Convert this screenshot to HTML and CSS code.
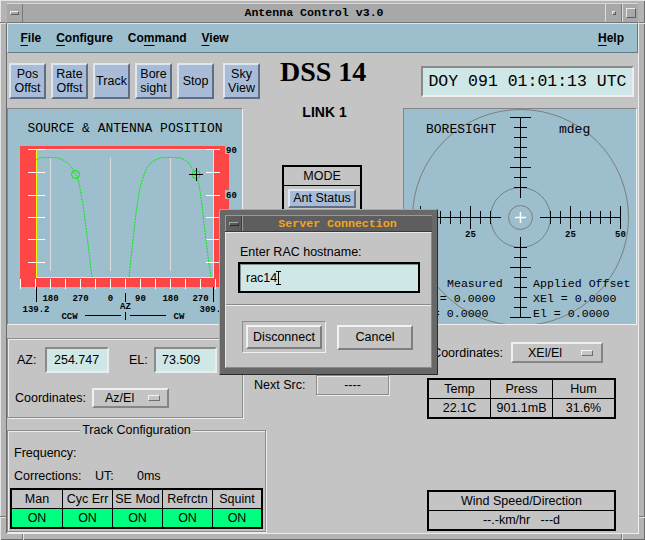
FILE: index.html
```html
<!DOCTYPE html>
<html>
<head>
<meta charset="utf-8">
<title>Antenna Control v3.0</title>
<link rel="stylesheet" href="styles.css">
</head>
<body>
<div class="window">
  <div class="titlebar">
    <div class="tb-btn tb-menu"><span class="glyph-bar"></span></div>
    <div class="tb-title">Antenna Control v3.0</div>
    <div class="tb-btn tb-min"><span class="glyph-dot"></span></div>
    <div class="tb-btn tb-max"><span class="glyph-box"></span></div>
  </div>
  <div class="client">
    <div class="menubar">
      <span class="menu"><u>F</u>ile</span>
      <span class="menu"><u>C</u>onfigure</span>
      <span class="menu">Co<u>m</u>mand</span>
      <span class="menu"><u>V</u>iew</span>
      <span class="menu help"><u>H</u>elp</span>
    </div>
    <div class="toolbar">
      <div class="tbtn">Pos<br>Offst</div>
      <div class="tbtn">Rate<br>Offst</div>
      <div class="tbtn">Track</div>
      <div class="tbtn">Bore<br>sight</div>
      <div class="tbtn">Stop</div>
      <div class="tbtn sky">Sky<br>View</div>
      <div class="dss">DSS 14</div>
      <div class="doy">DOY 091 01:01:13 UTC</div>
    </div>
    <div class="columns">
      <div class="col-left">
        <div class="panel src">
          <div class="panel-title">SOURCE &amp; ANTENNA POSITION</div>
          <svg class="chart" width="234" height="184" viewBox="8 140 234 184">
            <rect x="20" y="146" width="209" height="141" fill="#ff4646"/>
            <rect x="36.5" y="149.5" width="177" height="128" fill="#9cbecd" stroke="#ffff00"/>
            <g stroke="#dcdcdc" shape-rendering="crispEdges">
              <line x1="50.5" y1="158" x2="50.5" y2="271"/>
              <line x1="110.5" y1="158" x2="110.5" y2="271"/>
              <line x1="170.5" y1="158" x2="170.5" y2="271"/>
            </g>
            <path stroke="#ffffff" shape-rendering="crispEdges" d="M28 149.5H45 M28 172.5H45 M28 195.5H45 M28 217.5H45 M28 239.5H45 M28 262.5H45 M206 149.5H220 M206 172.5H220 M206 195.5H220 M206 217.5H220 M206 239.5H220 M206 262.5H220 M20.5 279V289 M35.5 279V289 M50.5 279V289 M65.5 279V289 M80.5 279V289 M95.5 279V289 M110.5 279V289 M125.5 279V289 M140.5 279V289 M155.5 279V289 M170.5 279V289 M185.5 279V289 M200.5 279V289 M215.5 279V289"/>
            <path stroke="#000000" shape-rendering="crispEdges" d="M36.5 287V302 M125.5 293V302 M213.5 287V302 M85 315.5H121 M130 315.5H166 M125.5 312V320"/>
            <g fill="none" stroke="#00f000" stroke-width="1" stroke-dasharray="2 1">
              <polyline points="36,160 40,158 45,157.5 52,157.5 58,158 63,160 67,162.5 71,166.5 74,171 76,175 78,179 80,188 83,205 85,220 87,236 89,252 90.5,265 92,277"/>
              <polyline points="129,277 131,258 133,240 135,222 137,206 139,193 141,184 144,175 147,168 151,163 155,160 160,158 166,157.5 175,157.5 181,158 185,160 189,163 192,168 195,173 197,178 199,185 200,191 202,205 204,224 206,240 207.5,252 209,264 211,277"/>
            </g>
            <circle cx="75.5" cy="174.5" r="4" fill="none" stroke="#00f000"/>
            <circle cx="196" cy="174.5" r="4" fill="none" stroke="#00f000"/>
            <path stroke="#000000" shape-rendering="crispEdges" d="M189 174.5H203 M196.5 168V181"/>
            <rect x="225" y="145" width="13" height="9" fill="#9cbecd"/>
            <rect x="225" y="190" width="13" height="9" fill="#9cbecd"/>
            <g class="t9">
              <text x="231.5" y="153" text-anchor="middle">90</text>
              <text x="231.5" y="198" text-anchor="middle">60</text>
              <text x="50.5" y="301" text-anchor="middle">180</text>
              <text x="80.5" y="301" text-anchor="middle">270</text>
              <text x="110.5" y="301" text-anchor="middle">0</text>
              <text x="140.5" y="301" text-anchor="middle">90</text>
              <text x="170.5" y="301" text-anchor="middle">180</text>
              <text x="200.5" y="301" text-anchor="middle">270</text>
              <text x="36" y="312" text-anchor="middle">139.2</text>
              <text x="213" y="312" text-anchor="middle">309.2</text>
              <text x="125.5" y="309" text-anchor="middle">AZ</text>
              <text x="69.5" y="319" text-anchor="middle">CCW</text>
              <text x="179" y="319" text-anchor="middle">CW</text>
            </g>
          </svg>
        </div>
        <div class="azel-box">
          <div class="az-row">
            <span class="lbl-az">AZ:</span>
            <span class="field f-az">254.747</span>
            <span class="lbl-el">EL:</span>
            <span class="field f-el">73.509</span>
          </div>
          <div class="coord-row-left">
            <span class="lbl-coord">Coordinates:</span>
            <span class="option opt-az">Az/El<i class="ind"></i></span>
          </div>
        </div>
        <fieldset class="track">
          <legend>Track Configuration</legend>
          <div class="trow">Frequency:</div>
          <div class="trow"><span class="corr">Corrections:</span><span class="ut">UT:</span><span class="ms">0ms</span></div>
          <div class="g5">
            <div class="cell">Man</div>
            <div class="cell">Cyc Err</div>
            <div class="cell">SE Mod</div>
            <div class="cell">Refrctn</div>
            <div class="cell">Squint</div>
            <div class="cell on">ON</div>
            <div class="cell on">ON</div>
            <div class="cell on">ON</div>
            <div class="cell on">ON</div>
            <div class="cell on">ON</div>
          </div>
        </fieldset>
      </div>
      <div class="col-mid">
        <div class="link">LINK 1</div>
        <div class="mode">
          <div class="mode-h">MODE</div>
          <div class="ant">Ant Status</div>
        </div>
        <div class="next">
          <span class="next-l">Next Src:</span>
          <span class="next-v">----</span>
        </div>
      </div>
      <div class="col-right">
        <div class="panel bore">
          <svg class="chart" width="232" height="215" viewBox="404 109 232 215">
            <g fill="none" stroke="#7e7e7e">
              <circle cx="520.5" cy="217.5" r="108"/>
              <circle cx="520.5" cy="217.5" r="30"/>
              <circle cx="520.5" cy="217.5" r="12"/>
            </g>
            <path stroke="#000000" shape-rendering="crispEdges" d="M520.5 117V198 M520.5 237V318 M420 217.5H501 M540 217.5H621 M514 187.5H527 M514 177.5H527 M510 167.5H531 M514 157.5H527 M514 147.5H527 M514 137.5H527 M514 127.5H527 M510 117.5H531 M514 247.5H527 M514 257.5H527 M510 267.5H531 M514 277.5H527 M514 287.5H527 M514 297.5H527 M514 307.5H527 M510 317.5H531 M490.5 211V224 M480.5 211V224 M470.5 206V229 M460.5 211V224 M450.5 211V224 M440.5 211V224 M430.5 211V224 M420.5 206V229 M550.5 211V224 M560.5 211V224 M570.5 206V229 M580.5 211V224 M590.5 211V224 M600.5 211V224 M610.5 211V224 M620.5 206V229"/>
            <path stroke="#ffffff" stroke-width="1.5" d="M515 217.5H526 M520.5 212V223"/>
            <g class="t9">
              <text x="420.5" y="237" text-anchor="middle">50</text>
              <text x="470.5" y="237" text-anchor="middle">25</text>
              <text x="570.5" y="237" text-anchor="middle">25</text>
              <text x="620.5" y="237" text-anchor="middle">50</text>
            </g>
            <g class="t13">
              <text x="426" y="133">BORESIGHT</text>
              <text x="559" y="133">mdeg</text>
            </g>
            <g class="t12">
              <text x="447" y="287">Measured</text>
              <text x="533" y="287">Applied Offset</text>
              <text x="412" y="302">XEl = 0.0000</text>
              <text x="533" y="302">XEl = 0.0000</text>
              <text x="412" y="317">El  = 0.0000</text>
              <text x="533" y="317">El  = 0.0000</text>
            </g>
          </svg>
        </div>
        <div class="coord-row-right">
          <span class="lbl-coord-r">Coordinates:</span>
          <span class="option opt-xel">XEl/El<i class="ind"></i></span>
        </div>
        <div class="met">
          <div class="cell">Temp</div>
          <div class="cell">Press</div>
          <div class="cell">Hum</div>
          <div class="cell">22.1C</div>
          <div class="cell">901.1mB</div>
          <div class="cell">31.6%</div>
        </div>
        <div class="wind">
          <div class="cell">Wind Speed/Direction</div>
          <div class="cell pre">--.-km/hr   ---d</div>
        </div>
      </div>
    </div>
  </div>

  <div class="dialog">
    <div class="dlg-title">
      <div class="dlg-menu"><span class="glyph-bar dark"></span></div>
      <div class="dlg-name">Server Connection</div>
    </div>
    <div class="dlg-body">
      <div class="dlg-label">Enter RAC hostname:</div>
      <div class="dlg-input"><span>rac14</span><span class="caret"></span></div>
      <div class="dlg-sep"></div>
      <div class="dlg-buttons">
        <div class="default-ring"><div class="pbtn">Disconnect</div></div>
        <div class="pbtn cancel">Cancel</div>
      </div>
    </div>
  </div>

  <span class="notch nh nl1"></span>
  <span class="notch nh nr1"></span>
  <span class="notch nh nl2"></span>
  <span class="notch nh nr2"></span>
  <span class="notch nv nb1"></span>
  <span class="notch nv nb2"></span>
</div>
</body>
</html>
```

FILE: styles.css
```css
* { box-sizing: border-box; }
html, body { margin: 0; padding: 0; }
body {
  width: 645px;
  height: 540px;
  overflow: hidden;
  background: #b4b4b4;
  font-family: "Liberation Sans", Arial, sans-serif;
  font-size: 12.5px;
  color: #000;
}

.window {
  position: relative;
  width: 645px;
  height: 540px;
  padding: 3px 6px 6px 6px;
  background: #b4b4b4;
  box-shadow: inset 1px 1px 0 #e4e4e4, inset -1px -1px 0 #6a6a6a;
  display: flex;
  flex-direction: column;
}

/* ---------- title bar ---------- */
.titlebar {
  height: 20px;
  margin: 0 1px;
  display: flex;
  background: #a8a8a8;
  border-top: 1px solid #d8d8d8;
  border-bottom: 1px solid #737373;
}
.tb-btn {
  display: flex;
  align-items: center;
  justify-content: center;
  border-left: 1px solid #dcdcdc;
  border-right: 1px solid #7a7a7a;
}
.tb-menu { width: 16px; border-left: none; }
.tb-min { width: 17px; }
.tb-max { width: 16px; border-right: none; }
.tb-title {
  flex: 1;
  text-align: center;
  font-family: "Liberation Mono", monospace;
  font-weight: bold;
  font-size: 11.6px;
  line-height: 18px;
}
.glyph-bar {
  display: block;
  width: 9px;
  height: 4px;
  background: #a8a8a8;
  border-top: 1px solid #ececec;
  border-left: 1px solid #ececec;
  border-bottom: 1px solid #5e5e5e;
  border-right: 1px solid #5e5e5e;
}
.glyph-bar.dark {
  width: 10px;
  background: #5c5c5c;
  border-top-color: #a4a4a4;
  border-left-color: #a4a4a4;
  border-bottom-color: #2a2a2a;
  border-right-color: #2a2a2a;
}
.glyph-dot {
  display: block;
  width: 4px;
  height: 4px;
  border-top: 1px solid #e8e8e8;
  border-left: 1px solid #e8e8e8;
  border-bottom: 1px solid #5e5e5e;
  border-right: 1px solid #5e5e5e;
}
.glyph-box {
  display: block;
  width: 10px;
  height: 10px;
  border-top: 1px solid #e8e8e8;
  border-left: 1px solid #e8e8e8;
  border-bottom: 1px solid #5e5e5e;
  border-right: 1px solid #5e5e5e;
}

/* ---------- client ---------- */
.client {
  flex: 1;
  display: flex;
  flex-direction: column;
  background: #c4c4c4;
  border-left: 1px solid #6c6c6c;
  border-right: 1px solid #ececec;
  border-bottom: 1px solid #ececec;
}

.menubar {
  height: 30px;
  flex: none;
  display: flex;
  align-items: center;
  gap: 15px;
  padding: 0 13px 0 12.5px;
  background: #9cbecd;
  border: 1px solid;
  border-color: #d8e8ef #5e7c8a #5e7c8a #d8e8ef;
  font-weight: bold;
  font-size: 12px;
}
.menu u {
  text-decoration: underline;
  text-underline-offset: 3px;
}
.help { margin-left: auto; }

.toolbar {
  height: 50px;
  flex: none;
  display: flex;
  align-items: flex-start;
  padding-left: 2px;
}
.tbtn {
  width: 37px;
  height: 36px;
  margin-top: 10px;
  margin-right: 5px;
  display: flex;
  align-items: center;
  justify-content: center;
  text-align: center;
  line-height: 14px;
  background: #a8bcd8;
  border: 2px solid;
  border-color: #dde7f3 #5f6e84 #5f6e84 #dde7f3;
}
.tbtn.sky { margin-left: 4px; margin-right: 0; }
.dss {
  margin-left: 20px;
  margin-top: 3px;
  font-family: "Liberation Serif", serif;
  font-weight: bold;
  font-size: 28px;
  line-height: 32px;
}
.doy {
  margin-left: auto;
  margin-right: 4px;
  margin-top: 13px;
  width: 213px;
  height: 31px;
  background: #cfe7e6;
  border: 2px solid;
  border-color: #8a8a8a #efefef #efefef #8a8a8a;
  font-family: "Liberation Mono", monospace;
  font-size: 16.5px;
  line-height: 27px;
  text-align: center;
}

.columns {
  flex: 1;
  display: flex;
  align-items: flex-start;
}
.col-left { width: 236px; flex: none; display: flex; flex-direction: column; }
.col-mid { width: 160px; flex: none; display: flex; flex-direction: column; }
.col-right { width: 235px; flex: none; display: flex; flex-direction: column; }

.panel {
  margin-top: 5px;
  height: 217px;
  background: #9cbecd;
  border: 1px solid;
  border-color: #858585 #f0f0f0 #f0f0f0 #858585;
}
.src { width: 236px; }
.bore { width: 234px; }
.panel-title {
  height: 31px;
  padding-top: 13px;
  line-height: 14px;
  text-align: center;
  font-family: "Liberation Mono", monospace;
  font-size: 13px;
}
.chart { display: block; }
.t9 {
  font-family: "Liberation Mono", monospace;
  font-weight: bold;
  font-size: 9px;
  fill: #000;
}
.t13 {
  font-family: "Liberation Mono", monospace;
  font-size: 13px;
  fill: #000;
}
.t12 {
  font-family: "Liberation Mono", monospace;
  font-size: 11.6px;
  fill: #000;
  white-space: pre;
}

/* ---------- AZ / EL ---------- */
.azel-box {
  margin-top: 13px;
  height: 80px;
  width: 236px;
  border: 1px solid #8c8c8c;
  box-shadow: inset 1px 1px 0 #ececec, 1px 1px 0 #ececec;
}
.az-row {
  display: flex;
  align-items: center;
  height: 26px;
  margin-top: 8px;
  padding-left: 9px;
}
.lbl-az { width: 28px; }
.lbl-el { width: 25px; margin-left: 20px; }
.field {
  height: 26px;
  background: #cfe7e6;
  border: 2px solid;
  border-color: #8a8a8a #ececec #ececec #8a8a8a;
  line-height: 22px;
}
.f-az { width: 64px; padding-left: 7px; }
.f-el { width: 63px; padding-left: 6px; }
.coord-row-left {
  display: flex;
  align-items: center;
  height: 20px;
  margin-top: 15px;
  padding-left: 7px;
}
.lbl-coord { width: 77px; }
.option {
  display: flex;
  align-items: center;
  justify-content: space-between;
  background: #c4c4c4;
  border: 2px solid;
  border-color: #f0f0f0 #858585 #858585 #f0f0f0;
}
.opt-az { width: 77px; height: 20px; padding: 0 7px 0 11px; }
.opt-xel { width: 92px; height: 21px; padding: 0 8px 0 15px; }
.ind {
  display: block;
  width: 12px;
  height: 6px;
  border-top: 1px solid #f4f4f4;
  border-left: 1px solid #f4f4f4;
  border-bottom: 1px solid #6e6e6e;
  border-right: 1px solid #6e6e6e;
}

/* ---------- Track configuration ---------- */
.track {
  margin: 4px 0 0 0;
  padding: 0 2px 2px 2px;
  width: 259px;
  border: 1px solid #8c8c8c;
  box-shadow: inset 1px 1px 0 #ececec, 1px 1px 0 #ececec;
  min-width: 0;
}
.track legend {
  margin: 0 auto;
  padding: 0 2px;
  line-height: 16px;
  background: #c4c4c4;
}
.trow {
  margin-top: 7px;
  line-height: 16px;
  padding-left: 4px;
}
.corr { display: inline-block; width: 81px; }
.ut { display: inline-block; width: 42px; }
.g5 {
  margin-top: 4px;
  display: grid;
  grid-template-columns: 50px 49px 49px 49px 48px;
  grid-auto-rows: 18px;
  gap: 1px;
  background: #000;
  border: 2px solid #000;
  width: 253px;
}
.cell {
  background: #c4c4c4;
  text-align: center;
  line-height: 18px;
  white-space: nowrap;
}
.cell.on { background: #00ff80; }
.cell.pre { white-space: pre; }

/* ---------- middle ---------- */
.link {
  height: 18px;
  line-height: 18px;
  text-align: center;
  padding-left: 3px;
  font-weight: bold;
  font-size: 14px;
}
.mode {
  margin: 44px 0 0 39px;
  width: 80px;
  height: 120px;
  border: 2px solid #000;
}
.mode-h {
  height: 19px;
  line-height: 18px;
  text-align: center;
  border-bottom: 1px solid #000;
}
.ant {
  margin: 3px 0 0 4px;
  width: 68px;
  height: 19px;
  line-height: 15px;
  text-align: center;
  background: #a8bcd8;
  border: 2px solid;
  border-color: #dde7f3 #5f6e84 #5f6e84 #dde7f3;
}
.next {
  margin-top: 90px;
  padding-left: 11px;
  display: flex;
  align-items: center;
  height: 20px;
}
.next-l { width: 62px; }
.next-v {
  width: 73px;
  height: 20px;
  line-height: 18px;
  text-align: center;
  border: 1px solid #8c8c8c;
  box-shadow: inset 1px 1px 0 #ececec, 1px 1px 0 #ececec;
}

/* ---------- right bottom ---------- */
.coord-row-right {
  display: flex;
  align-items: center;
  height: 21px;
  margin-top: 17px;
}
.lbl-coord-r { width: 100px; text-align: right; }
.opt-xel { margin-left: 8px; }
.met {
  margin: 15px 0 0 24px;
  width: 189px;
  display: grid;
  grid-template-columns: 61px 61px 61px;
  grid-auto-rows: 18px;
  gap: 1px;
  background: #000;
  border: 2px solid #000;
}
.wind {
  margin: 71px 0 0 24px;
  width: 189px;
  display: grid;
  grid-template-columns: 185px;
  grid-auto-rows: 18px;
  gap: 1px;
  background: #000;
  border: 2px solid #000;
}

/* ---------- dialog ---------- */
.dialog {
  position: absolute;
  left: 219px;
  top: 209px;
  width: 219px;
  height: 166px;
  padding: 5px 5px 6px 5px;
  background: #686868;
  border: 1px solid;
  border-color: #a8a8a8 #2c2c2c #2c2c2c #a8a8a8;
  display: flex;
  flex-direction: column;
}
.dlg-title {
  height: 17px;
  display: flex;
  background: #5e5e5e;
  border-top: 1px solid #9a9a9a;
  border-bottom: 1px solid #3a3a3a;
}
.dlg-menu {
  width: 17px;
  display: flex;
  align-items: center;
  justify-content: center;
  border-right: 1px solid #3a3a3a;
  border-left: 1px solid #9a9a9a;
}
.dlg-name {
  flex: 1;
  text-align: center;
  color: #f8a31c;
  font-family: "Liberation Mono", monospace;
  font-weight: bold;
  font-size: 11.6px;
  line-height: 15px;
  border-left: 1px solid #9a9a9a;
}
.dlg-body {
  flex: 1;
  background: #c4c4c4;
  border: 1px solid;
  border-color: #e8e8e8 #8a8a8a #8a8a8a #e8e8e8;
}
.dlg-label {
  margin-top: 12px;
  padding-left: 14px;
  line-height: 15px;
}
.dlg-input {
  margin: 2px 0 0 12px;
  width: 182px;
  height: 31px;
  padding-left: 6px;
  display: flex;
  align-items: center;
  background: #cfe7e6;
  border: 2px solid #000;
  box-shadow: inset 1px 1px 0 #7d8f8e;
}
.caret {
  display: inline-block;
  width: 5px;
  height: 14px;
  margin-left: -1px;
  border-top: 1px solid #000;
  border-bottom: 1px solid #000;
  background: linear-gradient(to right, transparent 2px, #000 2px, #000 3px, transparent 3px);
}
.dlg-sep {
  margin-top: 11px;
  height: 2px;
  border-top: 1px solid #8a8a8a;
  border-bottom: 1px solid #f0f0f0;
}
.dlg-buttons {
  display: flex;
  align-items: center;
  padding: 15px 0 0 16px;
}
.default-ring {
  width: 84px;
  height: 32px;
  padding: 3px;
  border: 1px solid;
  border-color: #8c8c8c #f0f0f0 #f0f0f0 #8c8c8c;
}
.pbtn {
  width: 76px;
  height: 24px;
  line-height: 20px;
  text-align: center;
  border: 2px solid;
  border-color: #f2f2f2 #7e7e7e #7e7e7e #f2f2f2;
  background: #c4c4c4;
}
.pbtn.cancel { margin-left: 11px; height: 25px; line-height: 21px; }

/* ---------- frame notches ---------- */
.notch { position: absolute; background: #e2e2e2; }
.nh { width: 6px; height: 1px; box-shadow: 0 -1px 0 #7a7a7a; }
.nv { width: 1px; height: 6px; top: 534px; box-shadow: -1px 0 0 #7a7a7a; }
.nl1 { left: 0; top: 23px; }
.nr1 { right: 0; top: 23px; }
.nl2 { left: 0; top: 517px; }
.nr2 { right: 0; top: 517px; }
.nb1 { left: 23px; }
.nb2 { left: 622px; }
```
